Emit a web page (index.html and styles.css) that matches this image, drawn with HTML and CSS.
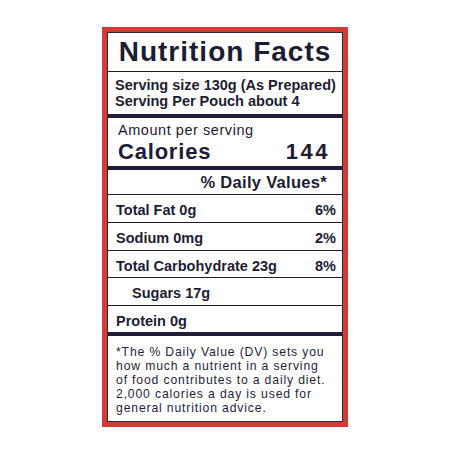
FILE: index.html
```html
<!DOCTYPE html>
<html lang="en">
<head>
  <meta charset="UTF-8" />
  <meta name="viewport" content="width=device-width, initial-scale=1.0"/>
  <title>Nutrition Facts</title>
  <link rel="stylesheet" href="styles.css">
</head>
<body>
  <div class="label">
    <div class="panel">
      <h1 class="title">Nutrition Facts</h1>

      <div class="serving">
        <div>Serving size 130g (As Prepared)</div>
        <div>Serving Per Pouch about 4</div>
      </div>

      <div class="calories">
        <div class="amount">Amount per serving</div>
        <div class="cal-row">
          <span>Calories</span>
          <span class="cal-num">144</span>
        </div>
      </div>

      <div class="dv">% Daily Values*</div>

      <div class="row"><span>Total Fat 0g</span><span>6%</span></div>
      <div class="row"><span>Sodium 0mg</span><span>2%</span></div>
      <div class="row"><span>Total Carbohydrate 23g</span><span>8%</span></div>
      <div class="row sub"><span>Sugars 17g</span></div>
      <div class="row last"><span>Protein 0g</span></div>

      <p class="note">
        *The % Daily Value (DV) sets you<br>
        how much a nutrient in a serving<br>
        of food contributes to a daily diet.<br>
        2,000 calories a day is used for<br>
        general nutrition advice.
      </p>
    </div>
  </div>
</body>
</html>
```

FILE: styles.css
```css
body {
  margin: 0;
  background: #ffffff;
  font-family: "Liberation Sans", Arial, sans-serif;
  color: #1d1c33;
}

.label {
  box-sizing: border-box;
  width: 246px;
  height: 400px;
  margin: 27px 0 0 102px;
  border: 5px solid #d33b34;
}

.panel {
  height: 100%;
  box-sizing: border-box;
  border: 1px solid #2a2840;
  display: flex;
  flex-direction: column;
}

.title {
  margin: 0;
  height: 39px;
  box-sizing: border-box;
  border-bottom: 1px solid #1f1d3a;
  font-size: 28px;
  line-height: 38px;
  letter-spacing: 1px;
  font-weight: bold;
  text-align: center;
}

.serving {
  padding: 5px 6px 5px 7px;
  font-size: 14.5px;
  line-height: 16px;
  font-weight: bold;
  border-bottom: 4px solid #1f1d3a;
}

.calories {
  padding: 4px 12px 0.5px 10px;
  border-bottom: 4px solid #1f1d3a;
}

.amount {
  font-size: 14.5px;
  line-height: 16px;
  letter-spacing: 0.55px;
}

.cal-row {
  display: flex;
  justify-content: space-between;
  font-size: 22px;
  line-height: 27.5px;
  letter-spacing: 0.8px;
  font-weight: bold;
}

.cal-num {
  letter-spacing: 2.5px;
}

.dv {
  height: 25px;
  box-sizing: border-box;
  padding-right: 15px;
  border-bottom: 1px solid #1f1d3a;
  font-size: 16.5px;
  line-height: 24px;
  letter-spacing: 0.3px;
  font-weight: bold;
  text-align: right;
}

.row {
  height: 27.75px;
  box-sizing: border-box;
  display: flex;
  justify-content: space-between;
  padding: 5px 6px 0 8px;
  border-bottom: 1px solid #1f1d3a;
  font-size: 14.5px;
  line-height: 20px;
  font-weight: bold;
}

.sub {
  padding-left: 24px;
}

.last {
  height: 30px;
  border-bottom: 4px solid #1f1d3a;
}

.note {
  margin: 0;
  padding: 9px 4px 0 8px;
  font-size: 12.2px;
  line-height: 14px;
  letter-spacing: 0.85px;
  white-space: nowrap;
  color: #1f1d3a;
}
```
